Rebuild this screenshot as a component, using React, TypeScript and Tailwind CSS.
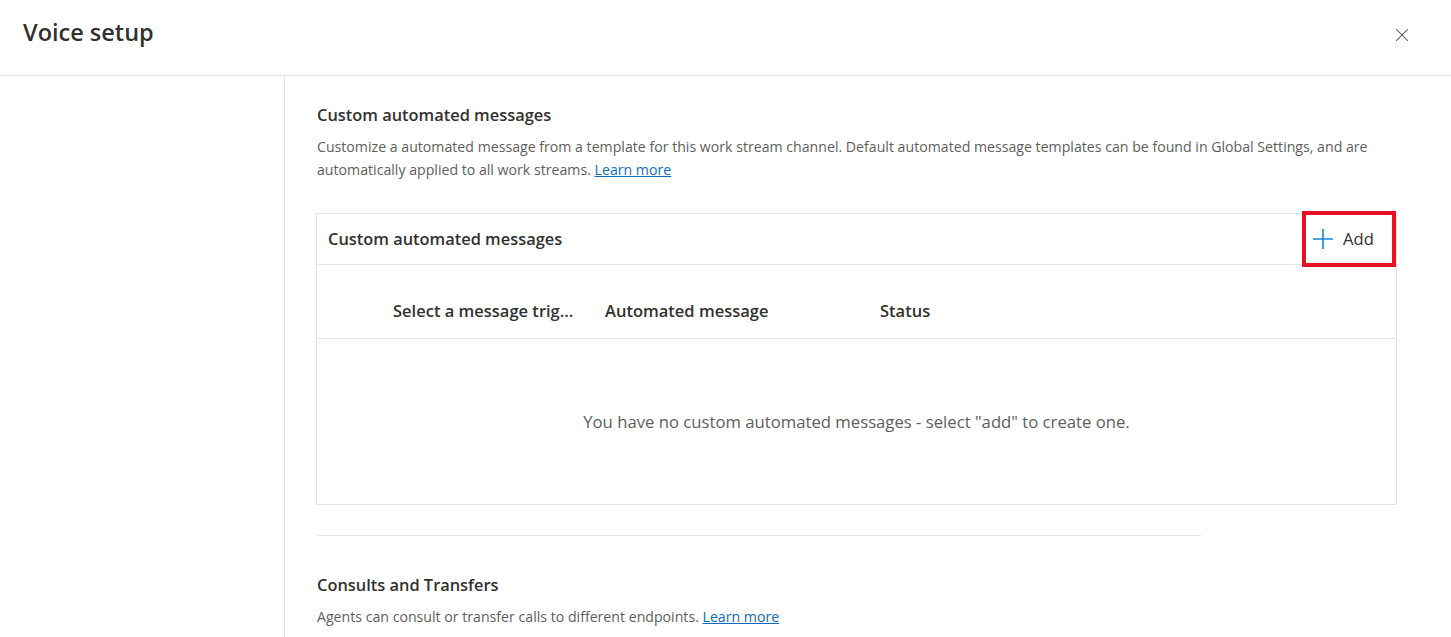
import { X } from "lucide-react";

const font = { fontFamily: '"Segoe UI", "Open Sans", sans-serif' };

const columns = [
  { label: "Select a message trig...", width: "w-[212px]" },
  { label: "Automated message", width: "w-[275px]" },
  { label: "Status", width: "w-[200px]" },
];

export default function App() {
  return (
    <div className="flex h-[637px] w-[1451px] flex-col overflow-hidden bg-white text-[#323130]" style={font}>
      <header className="flex h-[76px] shrink-0 items-center justify-between border-b border-[#e6e6e6] pl-[23px] pr-[38px]">
        <h1 className="pb-[9px] text-[23.5px] font-semibold leading-none">Voice setup</h1>
        <X className="mb-[6px] h-[22px] w-[22px] text-[#484644]" strokeWidth={1.1} />
      </header>

      <div className="flex flex-1">
        <aside className="w-[285px] shrink-0 border-r border-[#e6e6e6]" />

        <main className="flex-1 pl-[32px] pr-[54px] pt-[28px]">
          <h2 className="text-[16.4px] font-semibold leading-[22px]">Custom automated messages</h2>
          <p className="mt-[9px] text-[14.15px] leading-[23px] text-[#605e5c]">
            Customize a automated message from a template for this work stream channel. Default automated message
            templates can be found in Global Settings, and are automatically applied to all work streams.{" "}
            <a href="#" className="text-[#0f6cbd] underline">Learn more</a>
          </p>

          <section className="-ml-px mt-[32px] border border-[#e6e6e6]">
            <div className="relative flex h-[51px] items-center border-b border-[#e6e6e6] pl-[11px]">
              <span className="text-[16.4px] font-semibold">Custom automated messages</span>
              <button className="absolute right-[0px] top-[-3px] flex h-[56px] w-[94px] items-center gap-[10px] border-4 border-[#e81123] pl-[7px] text-[16.6px]">
                <svg width="20" height="20" viewBox="0 0 20 20" className="text-[#1a86d9]">
                  <path d="M10 0v20M0 10h20" stroke="currentColor" strokeWidth="1.6" fill="none" />
                </svg>
                <span className="pt-[1px]">Add</span>
              </button>
            </div>

            <div className="flex h-[74px] items-start border-b border-[#e6e6e6] pl-[76px] pt-[35px]">
              {columns.map((c) => (
                <div key={c.label} className={`${c.width} text-[16.5px] font-semibold leading-[22px]`}>
                  {c.label}
                </div>
              ))}
            </div>

            <div className="flex h-[165px] items-center justify-center pt-[1px] text-[16.7px] text-[#605e5c]">
              You have no custom automated messages - select "add" to create one.
            </div>
          </section>

          <hr className="mt-[30px] w-[884px] border-[#e6e6e6]" />

          <h2 className="mt-[38px] text-[16.4px] font-semibold leading-[22px]">Consults and Transfers</h2>
          <p className="mt-[9px] text-[14.15px] leading-[23px] text-[#605e5c]">
            Agents can consult or transfer calls to different endpoints.{" "}
            <a href="#" className="text-[#0f6cbd] underline">Learn more</a>
          </p>
        </main>
      </div>
    </div>
  );
}
